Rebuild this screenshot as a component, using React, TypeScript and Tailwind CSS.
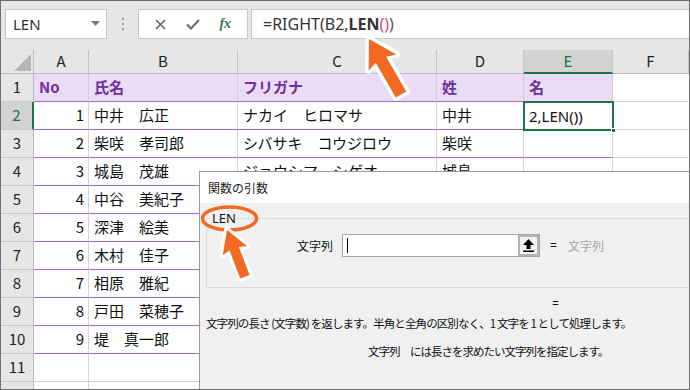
import React from "react";

const people: [number, string, string, string][] = [
  [1, "中井　広正", "ナカイ　ヒロマサ", "中井"],
  [2, "柴咲　孝司郎", "シバサキ　コウジロウ", "柴咲"],
  [3, "城島　茂雄", "ジョウシマ　シゲオ", "城島"],
  [4, "中谷　美紀子", "ナカタニ　ミキコ", "中谷"],
  [5, "深津　絵美", "フカツ　エミ", "深津"],
  [6, "木村　佳子", "キムラ　ヨシコ", "木村"],
  [7, "相原　雅紀", "アイハラ　マサキ", "相原"],
  [8, "戸田　菜穂子", "トダ　ナホコ", "戸田"],
  [9, "堤　真一郎", "ツツミ　シンイチロウ", "堤"],
];

const jp = "font-['Noto_Sans_CJK_JP',sans-serif]";

function RowHead({ n, active }: { n: number; active?: boolean }) {
  return (
    <div
      className={
        active
          ? "h-[28px] flex items-center justify-center bg-[#d2d2d2] text-[#217346] border-b border-[#c8c8c8] border-r-2 border-r-[#217346] text-[15px]"
          : "h-[28px] flex items-center justify-center bg-[#e6e6e6] text-[#222] border-b border-[#c8c8c8] border-r border-r-[#b8b8b8] text-[15px]"
      }
    >
      {n}
    </div>
  );
}

function FormulaBar() {
  return (
    <div className="h-[49px] bg-[#e6e6e6] pt-[8px] flex items-start">
      <div className="ml-[4px] w-[102px] h-[30px] bg-white border border-[#c6c6c6] flex items-center pl-[7px] pr-[6px] justify-between">
        <span className="text-[15px] text-[#333] font-['Noto_Sans',sans-serif]">LEN</span>
        <svg width="9" height="6" viewBox="0 0 9 6">
          <polygon points="0,0 9,0 4.5,5" fill="#7a7a7a" />
        </svg>
      </div>
      <div className="w-[31px] h-[30px] flex flex-col items-center justify-center gap-[3px]">
        <span className="w-[2px] h-[2px] bg-[#a0a0a0]" />
        <span className="w-[2px] h-[2px] bg-[#a0a0a0]" />
        <span className="w-[2px] h-[2px] bg-[#a0a0a0]" />
      </div>
      <div className="w-[110px] h-[30px] bg-white border border-[#c6c6c6] flex items-center justify-around px-[6px]">
        <svg width="11" height="11" viewBox="0 0 11 11">
          <path d="M1 1 L10 10 M10 1 L1 10" stroke="#666" strokeWidth="1.6" />
        </svg>
        <svg width="14" height="11" viewBox="0 0 14 11">
          <path d="M1 5.5 L5 9.5 L13 1" stroke="#6e6e6e" strokeWidth="2.2" fill="none" />
        </svg>
        <span className="text-[14px] italic font-bold text-[#2e7d4f] font-['Liberation_Serif',serif] leading-none">
          fx
        </span>
      </div>
      <div className="ml-[3px] flex-1 h-[30px] bg-white border-y border-l border-[#c6c6c6] flex items-center pl-[11px] text-[16px] text-[#333] font-['Noto_Sans',sans-serif]">
        <span>=RIGHT(B2,</span>
        <span className="font-bold">LEN</span>
        <span className="text-[#e0457b]">()</span>
        <span className="text-[#555]">)</span>
      </div>
    </div>
  );
}

function Sheet() {
  const colHead =
    "h-[24px] flex items-center justify-center bg-[#e6e6e6] border-r border-[#c4c4c4] border-b border-b-[#bdbdbd] text-[15px] text-[#222]";
  return (
    <div className={`grid grid-cols-[33px_55px_149px_199px_87px_89px_1fr] ${jp}`}>
      <div className="h-[24px] bg-[#e6e6e6] border-r border-b border-[#bdbdbd] flex items-end justify-end pr-[2px] pb-[2px]">
        <svg width="17" height="17" viewBox="0 0 17 17">
          <polygon points="17,0 17,17 0,17" fill="#b5b5b5" />
        </svg>
      </div>
      <div className={colHead}>A</div>
      <div className={colHead}>B</div>
      <div className={colHead}>C</div>
      <div className={colHead}>D</div>
      <div className="h-[24px] flex items-center justify-center bg-[#d2d2d2] border-r border-[#c4c4c4] border-b-2 border-b-[#217346] text-[15px] text-[#217346]">
        E
      </div>
      <div className={colHead}>F</div>

      <RowHead n={1} />
      {["No", "氏名", "フリガナ", "姓", "名"].map((t) => (
        <div
          key={t}
          className="h-[28px] flex items-center pl-[5px] bg-[#eadcf4] border-r border-[#d6cade] border-b border-b-[#a468d4] text-[15px] font-bold text-[#7030a0]"
        >
          {t}
        </div>
      ))}
      <div className="h-[28px] border-b border-[#d4d4d4]" />

      {people.map(([no, name, kana, sei], i) => (
        <React.Fragment key={no}>
          <RowHead n={i + 2} active={i === 0} />
          <div className="h-[28px] flex items-center justify-end pr-[4px] border-r border-[#d4d4d4] border-b border-b-[#a468d4] text-[15px] text-[#111]">
            {no}
          </div>
          <div className="h-[28px] flex items-center pl-[5px] border-r border-[#d4d4d4] border-b border-b-[#a468d4] text-[15px] text-[#111] whitespace-nowrap">
            {name}
          </div>
          <div className="h-[28px] flex items-center pl-[5px] border-r border-[#d4d4d4] border-b border-b-[#a468d4] text-[15px] text-[#111] whitespace-nowrap">
            {kana}
          </div>
          <div className="h-[28px] flex items-center pl-[5px] border-r border-[#d4d4d4] border-b border-b-[#a468d4] text-[15px] text-[#111]">
            {sei}
          </div>
          {i === 0 ? (
            <div className="relative h-[28px] flex items-center pl-[5px] text-[15px] text-[#111] font-['Noto_Sans',sans-serif]">
              2,LEN())
              <div className="absolute -left-[1px] -top-[1px] -right-[1px] -bottom-[1px] border-2 border-[#217346]" />
              <div className="absolute -right-[3px] -bottom-[3px] w-[5px] h-[5px] bg-[#217346] border border-white" />
            </div>
          ) : (
            <div className="h-[28px] border-r border-[#d4d4d4] border-b border-b-[#a468d4]" />
          )}
          <div className="h-[28px] border-b border-[#d4d4d4]" />
        </React.Fragment>
      ))}

      {[11, 12].map((n) => (
        <React.Fragment key={n}>
          <RowHead n={n} />
          {[0, 1, 2, 3, 4].map((c) => (
            <div key={c} className="h-[28px] border-r border-b border-[#d4d4d4]" />
          ))}
          <div className="h-[28px] border-b border-[#d4d4d4]" />
        </React.Fragment>
      ))}
    </div>
  );
}

function ArgsDialog() {
  return (
    <div className={`absolute left-[198px] top-[170px] w-[600px] h-[260px] border-l border-t border-[#9a9a9a] bg-[#f0f0f0] ${jp}`}>
      <div className="h-[31px] bg-white flex items-center pl-[8px] text-[12px] text-[#222]">
        関数の引数
      </div>
      <fieldset className="ml-[6px] mt-[6px] mr-[20px] border border-[#d9d9d9] px-0 pb-[30px]">
        <legend className="ml-[3px] px-[2px] text-[13px] leading-[18px] text-[#111] font-['Noto_Sans',sans-serif]">
          LEN
        </legend>
        <div className="pt-[7px] flex items-center">
          <div className="w-[126px] text-right text-[12px] text-[#111]">文字列</div>
          <div className="ml-[9px] w-[198px] h-[23px] bg-white border border-[#a8a8a8] flex items-stretch">
            <div className="flex-1 flex items-center pl-[4px]">
              <span className="w-[1px] h-[15px] bg-black" />
            </div>
            <div className="w-[21px] bg-[#f4f4f4] border-2 border-[#b4b4b4] flex items-center justify-center">
              <svg width="11" height="13" viewBox="0 0 11 13">
                <polygon points="5.5,0 11,6 7.5,6 7.5,10 3.5,10 3.5,6 0,6" fill="#000" />
                <rect x="0" y="11.5" width="11" height="1.5" fill="#000" />
              </svg>
            </div>
          </div>
          <span className="ml-[10px] text-[12px] text-[#111] font-['Noto_Sans',sans-serif]">=</span>
          <span className="ml-[11px] text-[12px] text-[#a5a5a5]">文字列</span>
        </div>
      </fieldset>
      <div className="pl-[352px] pt-[8px] text-[12px] leading-[16px] text-[#111] font-['Noto_Sans',sans-serif]">=</div>
      <div className="pl-[6px] pt-[2px] text-[11.5px] leading-[18px] text-[#111] whitespace-nowrap tracking-[-0.9px]">
        文字列の長さ (文字数) を返します。半角と全角の区別なく、1 文字を 1 として処理します。
      </div>
      <div className="pl-[168px] pt-[10px] text-[11.5px] leading-[18px] text-[#111] whitespace-nowrap tracking-[-1px]">
        文字列　には長さを求めたい文字列を指定します。
      </div>
    </div>
  );
}

function Callouts() {
  return (
    <svg className="absolute left-0 top-0 pointer-events-none" width="690" height="390" viewBox="0 0 690 390">
      <g transform="translate(368,38) rotate(-30)">
        <polygon
          points="0,0 16,27 6,24 6,64 -6,64 -6,24 -16,27"
          fill="#f26a21"
          stroke="#fff"
          strokeWidth="7"
          strokeLinejoin="round"
          paintOrder="stroke"
        />
      </g>
      <ellipse cx="228.5" cy="217.5" rx="27" ry="11.5" fill="none" stroke="#f26a21" strokeWidth="3.5" />
      <g transform="translate(226,229) rotate(-21)">
        <polygon
          points="0,0 13,22 5,20 5,50 -5,50 -5,20 -13,22"
          fill="#f26a21"
          stroke="#fff"
          strokeWidth="6"
          strokeLinejoin="round"
          paintOrder="stroke"
        />
      </g>
    </svg>
  );
}

export default function App() {
  return (
    <div className="relative w-[690px] h-[390px] overflow-hidden border border-[#707070] bg-white">
      <FormulaBar />
      <Sheet />
      <ArgsDialog />
      <Callouts />
    </div>
  );
}
